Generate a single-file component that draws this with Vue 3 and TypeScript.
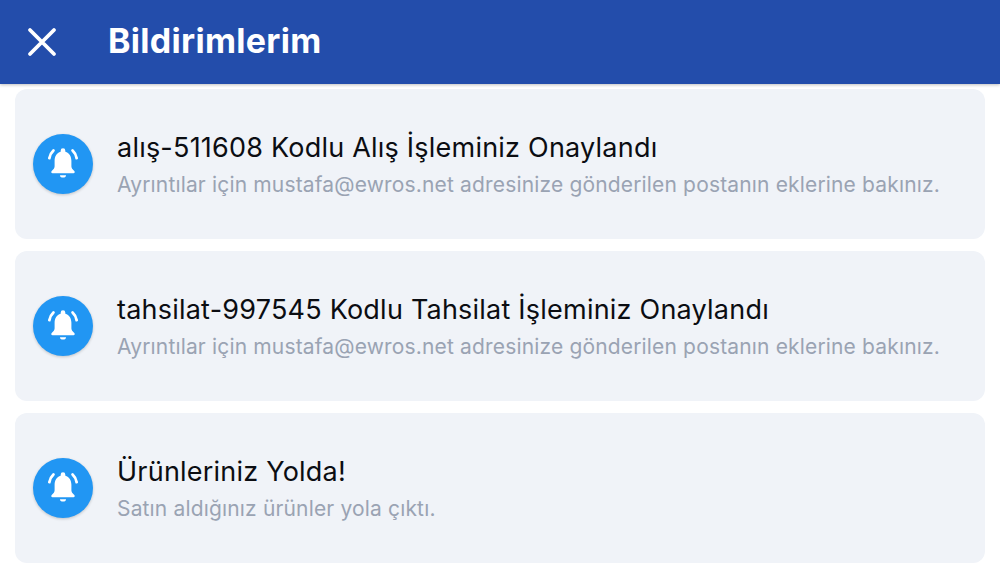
<script setup lang="ts">
interface Note { title: string; body: string }
const detail = 'Ayrıntılar için mustafa@ewros.net adresinize gönderilen postanın eklerine bakınız.'
const notes: Note[] = [
  { title: 'alış-511608 Kodlu Alış İşleminiz Onaylandı', body: detail },
  { title: 'tahsilat-997545 Kodlu Tahsilat İşleminiz Onaylandı', body: detail },
  { title: 'Ürünleriniz Yolda!', body: 'Satın aldığınız ürünler yola çıktı.' }
]
</script>

<template>
  <div class="page">
    <header class="bar">
      <svg class="close" width="30" height="30" viewBox="0 0 30 30" aria-hidden="true">
        <path d="M3 3 L27 27 M27 3 L3 27" stroke="#fff" stroke-width="3.8" stroke-linecap="round" fill="none" />
      </svg>
      <h1 class="heading">Bildirimlerim</h1>
    </header>
    <main class="list">
      <article v-for="n in notes" :key="n.title" class="card">
        <div class="badge">
          <svg width="42" height="42" viewBox="0 0 36 36" aria-hidden="true">
            <path d="M18 4.600a2 2 0 0 1 2 2v.9c3.400 1 5.200 4 5.200 7.800v4.600c0 1.600.9 2.600 2.500 4.200.7.700.3 1.900-.7 1.900H9c-1 0-1.400-1.200-.7-1.900 1.600-1.600 2.500-2.600 2.500-4.200v-4.600c0-3.800 1.800-6.800 5.200-7.800v-.9a2 2 0 0 1 2-2z" fill="#fff" />
            <path d="M15.400 27.600h5.200a2.600 2 0 0 1-5.200 0z" fill="#fff" />
            <path d="M9.800 6.400C7.900 8.200 6.700 10.400 6.300 13M26.200 6.400c1.900 1.800 3.100 4 3.500 6.600" stroke="#fff" stroke-width="2.400" stroke-linecap="round" fill="none" />
          </svg>
        </div>
        <div class="copy">
          <div class="title">{{ n.title }}</div>
          <div class="body">{{ n.body }}</div>
        </div>
      </article>
    </main>
  </div>
</template>

<style>
html, body { margin: 0; background: #fff; }
</style>

<style scoped>
.page {
  width: 1000px;
  height: 563px;
  overflow: hidden;
  background: #fff;
  font-family: "Inter", "Noto Sans", sans-serif;
}
.bar {
  height: 84px;
  box-sizing: border-box;
  background: #234dab;
  box-shadow: 0 1px 3px rgba(0, 0, 0, 0.25);
  display: flex;
  align-items: center;
  padding-left: 27px;
  gap: 51px;
  position: relative;
}
.heading {
  margin: -3px 0 0;
  color: #fff;
  font-size: 34px;
  font-weight: 700;
  letter-spacing: 0.3px;
}
.list {
  display: flex;
  flex-direction: column;
  gap: 12px;
  padding: 5px 15px 0;
}
.card {
  height: 150px;
  background: #f0f3f8;
  border-radius: 12px;
  display: flex;
  align-items: center;
  padding-left: 18px;
  gap: 24px;
}
.badge {
  width: 60px;
  height: 60px;
  border-radius: 50%;
  background: #2196f3;
  box-shadow: 0 1px 3px rgba(0, 0, 0, 0.2);
  display: flex;
  align-items: center;
  justify-content: center;
  flex: none;
}
.copy {
  display: flex;
  flex-direction: column;
  gap: 7px;
  margin-top: 2px;
}
.title {
  color: #0b0d12;
  font-size: 27px;
  line-height: 32px;
  letter-spacing: 0.22px;
}
.body {
  color: #9aa3b3;
  font-size: 21px;
  line-height: 28px;
  letter-spacing: 0.16px;
}
</style>
